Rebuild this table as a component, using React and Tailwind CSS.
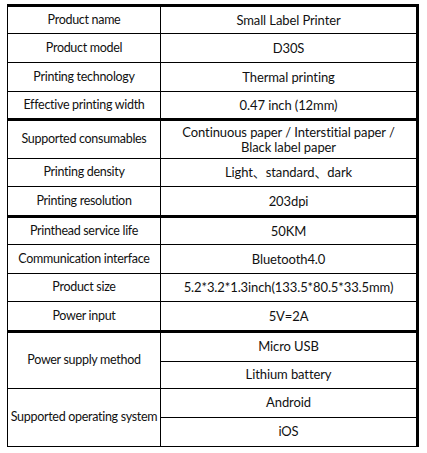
import React from 'react';

const font = { fontFamily: 'Lato, "Noto Sans CJK SC", sans-serif' };

const rows = [
  { label: 'Product name', value: 'Small Label Printer', h: 'h-[27px]' },
  { label: 'Product model', value: 'D30S', h: 'h-[29px]' },
  { label: 'Printing technology', value: 'Thermal printing', h: 'h-[29px]' },
  { label: 'Effective printing width', value: '0.47 inch (12mm)', h: 'h-[29px]', thick: true },
  {
    label: 'Supported consumables',
    value: (
      <>
        Continuous paper / Interstitial paper /
        <br />
        Black label paper
      </>
    ),
    h: 'h-[38px]',
  },
  { label: 'Printing density', value: 'Light、standard、dark', h: 'h-[28px]' },
  { label: 'Printing resolution', value: '203dpi', h: 'h-[31px]', thick: true },
  { label: 'Printhead service life', value: '50KM', h: 'h-[27px]' },
  { label: 'Communication interface', value: 'Bluetooth4.0', h: 'h-[29px]' },
  { label: 'Product size', value: '5.2*3.2*1.3inch(133.5*80.5*33.5mm)', h: 'h-[28px]' },
  { label: 'Power input', value: '5V=2A', h: 'h-[31px]', thick: true },
];

const Label = ({ children }) => (
  <div className="flex w-[153px] shrink-0 items-center justify-center whitespace-nowrap border-r border-black text-center text-[12.5px] tracking-[-0.3px]">
    {children}
  </div>
);

const Row = ({ label, value, h, thick }) => (
  <div className={`flex ${h} ${thick ? 'border-b-[3px]' : 'border-b'} border-black`}>
    <Label>{label}</Label>
    <div className="flex flex-1 items-center justify-center text-center leading-[15px]">{value}</div>
  </div>
);

const SplitRow = ({ label, top, bottom, h }) => (
  <div className={`flex ${h} border-b border-black`}>
    <Label>{label}</Label>
    <div className="flex flex-1 flex-col">
      <div className="flex h-[29px] items-center justify-center border-b border-black">{top}</div>
      <div className="flex flex-1 items-center justify-center">{bottom}</div>
    </div>
  </div>
);

export default function App() {
  return (
    <div className="min-h-[453px] w-[427px] bg-white pl-[7px] pt-[4px]" style={font}>
      <div className="w-[412px] border-l border-r-[3px] border-t-[3px] border-black text-[13px] tracking-[-0.1px] text-[#111]">
        {rows.map((r) => (
          <Row key={r.label} {...r} />
        ))}
        <SplitRow label="Power supply method" top="Micro USB" bottom="Lithium battery" h="h-[56px]" />
        <SplitRow label="Supported operating system" top="Android" bottom="iOS" h="h-[58px]" />
      </div>
    </div>
  );
}
